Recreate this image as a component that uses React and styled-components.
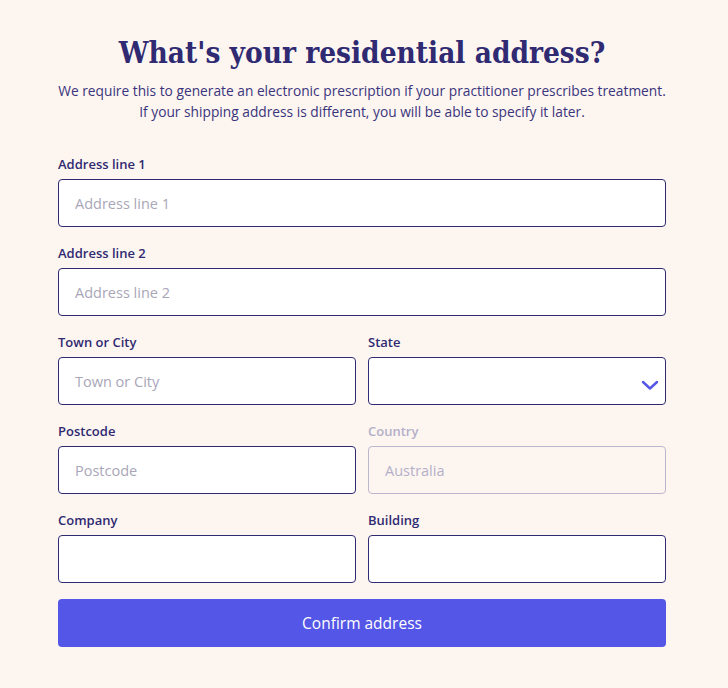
import styled, { createGlobalStyle } from "styled-components"

const Global = createGlobalStyle`
  html, body {
    margin: 0;
    padding: 0;
    background: #fdf6f0;
  }
  * { box-sizing: border-box; }
`

function App() {
  return (
    <>
      <Global />
      <Page>
        <Title>What's your residential address?</Title>
        <Intro>
          We require this to generate an electronic prescription if your practitioner prescribes treatment.
          <br />
          If your shipping address is different, you will be able to specify it later.
        </Intro>
        <Form onSubmit={(e) => e.preventDefault()}>
          <Field>
            <Label>Address line 1</Label>
            <Input placeholder="Address line 1" />
          </Field>
          <Field>
            <Label>Address line 2</Label>
            <Input placeholder="Address line 2" />
          </Field>
          <Row>
            <Field>
              <Label>Town or City</Label>
              <Input placeholder="Town or City" />
            </Field>
            <Field>
              <Label>State</Label>
              <SelectWrap>
                <Select defaultValue="">
                  <option value="" disabled></option>
                  <option>NSW</option>
                  <option>VIC</option>
                  <option>QLD</option>
                </Select>
                <Chevron width="18" height="12" viewBox="0 0 18 12">
                  <path d="M2 3 L9 9.5 L16 3" fill="none" stroke="#5356e6" strokeWidth="2.4" strokeLinecap="round" strokeLinejoin="round" />
                </Chevron>
              </SelectWrap>
            </Field>
          </Row>
          <Row>
            <Field>
              <Label>Postcode</Label>
              <Input placeholder="Postcode" />
            </Field>
            <Field>
              <Label $disabled>Country</Label>
              <Input $disabled disabled placeholder="Australia" />
            </Field>
          </Row>
          <Row>
            <Field>
              <Label>Company</Label>
              <Input />
            </Field>
            <Field>
              <Label>Building</Label>
              <Input />
            </Field>
          </Row>
          <Button type="submit">Confirm address</Button>
        </Form>
      </Page>
    </>
  )
}

const Page = styled.div`
  width: 608px;
  margin-left: 58px;
  padding-top: 34px;
  color: #2f2a72;
  font-family: "Open Sans", "Noto Sans", sans-serif;
`

const Title = styled.h1`
  margin: 0;
  text-align: center;
  font-family: "DejaVu Serif Condensed", "DejaVu Serif", serif;
  font-stretch: condensed;
  font-weight: 700;
  font-size: 29.5px;
  line-height: 38px;
  color: #2f2a72;
`

const Intro = styled.p`
  margin: 8px 0 0;
  text-align: center;
  font-size: 13.75px;
  line-height: 21px;
  color: #3a347c;
`

const Form = styled.form`
  display: flex;
  flex-direction: column;
  gap: 16px;
  margin-top: 32px;
`

const Row = styled.div`
  display: grid;
  grid-template-columns: 1fr 1fr;
  gap: 12px;
`

const Field = styled.div`
  display: flex;
  flex-direction: column;
  gap: 4px;
`

const Label = styled.label`
  font-size: 13px;
  font-weight: 600;
  line-height: 21px;
  color: ${(p) => (p.$disabled ? "#b4afc9" : "#2f2a72")};
`

const Input = styled.input`
  height: 48px;
  width: 100%;
  padding: 0 16px;
  border: 1px solid ${(p) => (p.$disabled ? "#bcb6cf" : "#2f2a72")};
  border-radius: 4px;
  background: ${(p) => (p.$disabled ? "#fdf6f0" : "#ffffff")};
  font-family: "Open Sans", "Noto Sans", sans-serif;
  font-size: 14.5px;
  color: #2f2a72;
  outline: none;
  &::placeholder {
    color: ${(p) => (p.$disabled ? "#b4afc9" : "#a9a6b8")};
  }
`

const SelectWrap = styled.div`
  position: relative;
`

const Select = styled.select`
  appearance: none;
  height: 48px;
  width: 100%;
  padding: 0 40px 0 16px;
  border: 1px solid #2f2a72;
  border-radius: 4px;
  background: #ffffff;
  font-family: "Open Sans", "Noto Sans", sans-serif;
  font-size: 14.5px;
  color: #2f2a72;
  outline: none;
`

const Chevron = styled.svg`
  position: absolute;
  right: 7px;
  top: 22px;
  pointer-events: none;
`

const Button = styled.button`
  height: 48px;
  border: none;
  border-radius: 4px;
  background: #5356e6;
  color: #ffffff;
  font-family: "Open Sans", "Noto Sans", sans-serif;
  font-size: 15.5px;
  font-weight: 500;
  cursor: pointer;
`

export default App
